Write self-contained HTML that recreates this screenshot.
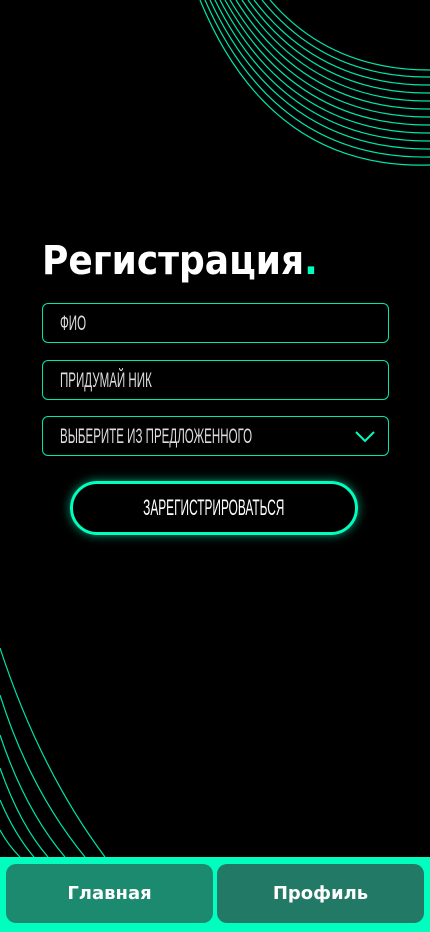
<!DOCTYPE html>
<html><head><meta charset="utf-8"><style>
html,body{margin:0;padding:0;background:#000;width:430px;height:932px;overflow:hidden;position:relative;font-family:"Liberation Sans","DejaVu Sans",sans-serif}
svg.bg{position:absolute;left:0;top:0}
h1{position:absolute;left:42px;top:238px;margin:0;color:#fff;font-size:40px;font-weight:bold;letter-spacing:0;font-family:"DejaVu Sans","Liberation Sans",sans-serif;transform:scaleX(0.9);transform-origin:left;white-space:nowrap}
h1 span{color:#00ffbf}
.inp{position:absolute;left:42px;width:347px;height:40px;border:1px solid #00e6ad;border-radius:6px;box-sizing:border-box;color:#ddd;font-family:"Liberation Sans Narrow","Liberation Sans",sans-serif;font-size:21px;line-height:39px;padding-left:17px;white-space:nowrap}
.inp i{display:inline-block;font-style:normal;transform:scaleX(0.55);transform-origin:left}
.btn{position:absolute;left:70px;top:481px;width:288px;height:54px;border:3px solid #00ffbf;border-radius:27px;box-sizing:border-box;box-shadow:0 0 10px rgba(0,255,191,.6);color:#fff;text-align:center;line-height:48px;font-family:"Liberation Sans Narrow","Liberation Sans",sans-serif;font-size:22px;white-space:nowrap}
.btn i{display:inline-block;font-style:normal;transform:scaleX(0.54)}
.nav{position:absolute;left:0;top:857px;width:430px;height:75px;background:#00ffbf}
.nb{position:absolute;top:7px;height:59px;border-radius:10px;color:#fff;font-weight:bold;font-size:18px;text-align:center;line-height:59px;font-family:"DejaVu Sans",sans-serif}
</style></head><body>
<svg class="bg" width="430" height="932" fill="none" stroke="#00e6a8" stroke-width="1.2">
<g>
<path d="M200 0 Q270 170 430 165"/>
<path d="M205 0 Q275 160 430 157"/>
<path d="M210 0 Q280 150 430 149"/>
<path d="M215 0 Q285 142 430 141"/>
<path d="M220 0 Q290 134 430 133"/>
<path d="M225 0 Q295 126 430 125"/>
<path d="M230 0 Q300 118 430 117"/>
<path d="M236 0 Q305 110 430 109"/>
<path d="M242 0 Q310 102 430 101"/>
<path d="M248 0 Q315 94 430 93"/>
<path d="M254 0 Q320 86 430 85"/>
<path d="M262 0 Q325 78 430 77"/>
<path d="M270 0 Q330 70 430 70"/>
</g>
<g>
<path d="M0 648 Q40 770 105 857"/>
<path d="M0 695 Q30 790 85 857"/>
<path d="M0 735 Q25 810 65 857"/>
<path d="M0 768 Q20 825 48 857"/>
<path d="M0 800 Q15 835 34 857"/>
<path d="M0 830 Q8 845 20 857"/>
</g>
</svg>
<h1>Регистрация<span>.</span></h1>
<div class="inp" style="top:303px"><i>ФИО</i></div>
<div class="inp" style="top:360px"><i>ПРИДУМАЙ НИК</i></div>
<div class="inp" style="top:416px"><i>ВЫБЕРИТЕ ИЗ ПРЕДЛОЖЕННОГО</i>
<svg style="position:absolute;right:12px;top:13px" width="22" height="13" fill="none" stroke="#00ffbf" stroke-width="2"><path d="M2 2 L11 11 L20 2"/></svg></div>
<div class="btn"><i>ЗАРЕГИСТРИРОВАТЬСЯ</i></div>
<div class="nav">
<div class="nb" style="left:6px;width:207px;background:#1c8a6e">Главная</div>
<div class="nb" style="left:217px;width:207px;background:#227a66">Профиль</div>
</div>
</body></html>
